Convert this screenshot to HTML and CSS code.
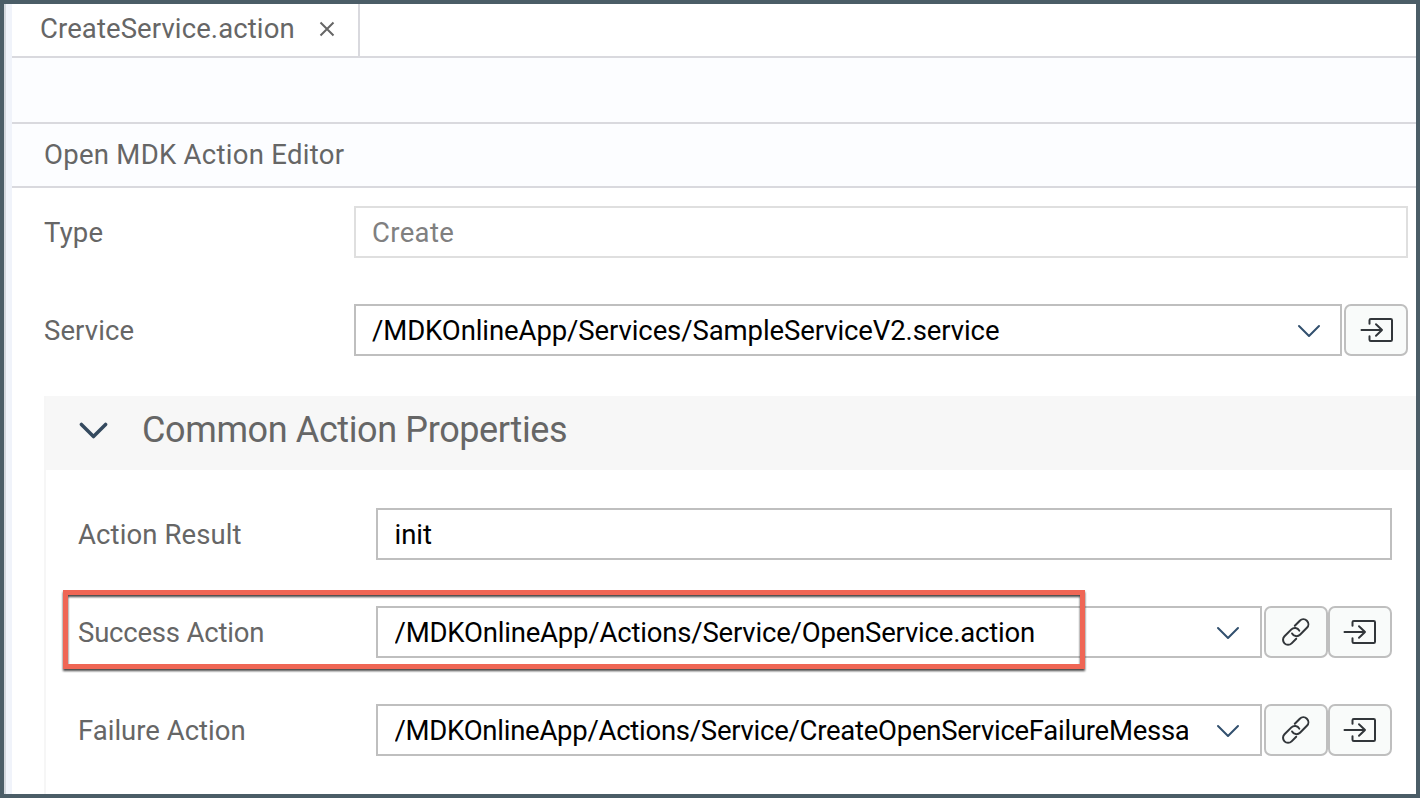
FILE: index.html
```html
<!DOCTYPE html>
<html lang="en">
<head>
<meta charset="utf-8">
<title>CreateService.action</title>
<link rel="stylesheet" href="styles.css">
</head>
<body>
<svg class="symbols" aria-hidden="true">
  <symbol id="chevron" viewBox="0 0 24 14"><path d="M2 2l10 10 10-10"/></symbol>
  <symbol id="goto" viewBox="0 0 34 26"><path d="M9.5 6.8V3.3q0-1.300 1.300-1.300H30.700q1.300 0 1.300 1.300V22.700q0 1.300-1.300 1.300H10.800q-1.300 0-1.300-1.300v-3.500M1.500 13h20.500M16 7.200l6 5.800-6 5.800"/></symbol>
  <symbol id="link" viewBox="0 0 30 30"><path d="M13.800 8.700l5-5a5 5 0 0 1 7.100 7.100l-6.900 6.900a5 5 0 0 1-7.900-1.200M15.200 21.800l-4.600 4.600a5 5 0 0 1-7.100-7.100l6.900-6.900a5 5 0 0 1 7.900 1.200"/></symbol>
</svg>
<div class="window">
  <div class="tabs">
    <div class="tab"><span class="tab-name">CreateService.action</span>
      <svg class="close" viewBox="0 0 16 16"><path d="M1.500 1.500l13 13M14.500 1.500l-13 13"/></svg>
    </div>
  </div>
  <div class="toolbar"></div>
  <div class="title"><span class="title-text">Open MDK Action Editor</span></div>
  <main class="form">
    <div class="row">
      <label class="label"><span class="t-type">Type</span></label>
      <div class="field readonly"><span class="value t-create">Create</span></div>
    </div>
    <div class="row">
      <label class="label"><span class="t-service">Service</span></label>
      <div class="field"><span class="value t-path1">/MDKOnlineApp/Services/SampleServiceV2.service</span><svg class="arrow"><use href="#chevron"/></svg></div>
      <button class="btn single"><svg class="goto"><use href="#goto"/></svg></button>
    </div>
    <section class="panel">
      <h2 class="panel-head"><svg class="toggle"><use href="#chevron"/></svg><span class="t-common">Common Action Properties</span></h2>
      <div class="panel-body">
        <div class="row">
          <label class="label"><span class="t-result">Action Result</span></label>
          <div class="field"><span class="value t-init">init</span></div>
        </div>
        <div class="row highlighted">
          <label class="label"><span class="t-success">Success Action</span></label>
          <div class="field"><span class="value t-path2">/MDKOnlineApp/Actions/Service/OpenService.action</span><svg class="arrow"><use href="#chevron"/></svg></div>
          <button class="btn"><svg class="link"><use href="#link"/></svg></button><button class="btn last"><svg class="goto"><use href="#goto"/></svg></button>
          <div class="highlight"></div>
        </div>
        <div class="row">
          <label class="label"><span class="t-failure">Failure Action</span></label>
          <div class="field"><span class="value t-path3">/MDKOnlineApp/Actions/Service/CreateOpenServiceFailureMessage.action</span><svg class="arrow"><use href="#chevron"/></svg></div>
          <button class="btn"><svg class="link"><use href="#link"/></svg></button><button class="btn last"><svg class="goto"><use href="#goto"/></svg></button>
        </div>
      </div>
    </section>
  </main>
</div>
</body>
</html>
```

FILE: styles.css
```css
* { box-sizing: border-box; }
body { margin: 0; font-family: Roboto, "Liberation Sans", sans-serif; font-size: 27.500px; color: #666; background: #fff; }
.symbols { position: absolute; width: 0; height: 0; }
svg { fill: none; stroke: #32363a; stroke-width: 2; stroke-linejoin: round; stroke-linecap: round; flex: none; }
.window { width: 1420px; height: 798px; border: 4px solid #4b5d67; overflow: hidden; background: linear-gradient(90deg, #d3d7dd 2px, #f0f3fa 2px, #f0f3fa 8px, #fff 8px); padding-left: 8px; }
.tabs { height: 54px; border-bottom: 2px solid #d9d9de; display: flex; }
.tab { width: 348px; border-right: 2px solid #d9d9de; display: flex; align-items: center; justify-content: space-between; padding: 0 23px 4px 28px; white-space: nowrap; }
.tab-name { letter-spacing: 0.1px; }
.close { width: 16px; height: 16px; stroke: #666; stroke-linecap: butt; margin-top: 2px; }
.toolbar { height: 66px; border-bottom: 2px solid #d9d9de; background: #fcfdff; }
.title { height: 64px; border-bottom: 2px solid #d9d9de; background: #fcfdff; padding: 0 0 2px 32px; display: flex; align-items: center; letter-spacing: 0.280px; }
.form { padding: 18px 0 0 32px; }
.row { display: flex; height: 52px; margin-bottom: 46px; padding-right: 8px; align-items: stretch; white-space: nowrap; }
.label { width: 310px; flex: none; display: flex; align-items: center; }
.field { flex: 1; min-width: 0; border: 2px solid #bfbfbf; background: #fff; color: #000; display: flex; align-items: center; padding: 0 19px 0 16px; }
.value { flex: 1; min-width: 0; overflow: hidden; }
.readonly { border-color: #dfdfdf; color: #808080; }
.arrow { width: 24px; height: 14px; stroke: #32506e; margin: 1px 0 0 26px; }
.btn { width: 64px; height: 52px; margin: 0 0 0 2px; padding: 0; border: 2px solid #bfbfbf; border-radius: 7px; background: #f9fbfa; display: flex; align-items: center; justify-content: center; }
.last { margin-left: 0; }
.single { padding-left: 1px; }
.goto { width: 34px; height: 26px; }
.link { width: 30px; height: 30px; }
.t-type { letter-spacing: 0.200px; }
.t-create { letter-spacing: 0.350px; }
.t-service, .t-result { letter-spacing: 0.100px; }
.t-path1 { letter-spacing: -0.095px; }
.t-path2 { letter-spacing: -0.190px; }
.t-path3 { letter-spacing: -0.260px; }
.t-success { letter-spacing: -0.200px; }
.t-common { letter-spacing: -0.380px; }
.panel { margin-top: -6px; border-left: 2px solid #f6f6f6; height: 410px; }
.panel-head { margin: 0; height: 74px; background: #f7f7f7; display: flex; align-items: center; font-size: 36px; font-weight: 400; padding: 0 0 6px 33px; gap: 34px; }
.toggle { width: 29px; height: 17px; stroke: #354a5f; stroke-width: 2.900; }
.panel-body { padding: 38px 16px 0 32px; }
.panel-body .row { padding-right: 8px; }
.panel-body .label { width: 298px; }
.panel-body .field { padding: 0 20px 0 16.500px; }
.panel-body .arrow { margin-left: 28px; }
.highlighted { position: relative; }
.highlight { position: absolute; left: -15px; top: -16px; width: 1022px; height: 79px; border: 5px solid #ef6655; filter: drop-shadow(0 2px 1px #444); }
```
